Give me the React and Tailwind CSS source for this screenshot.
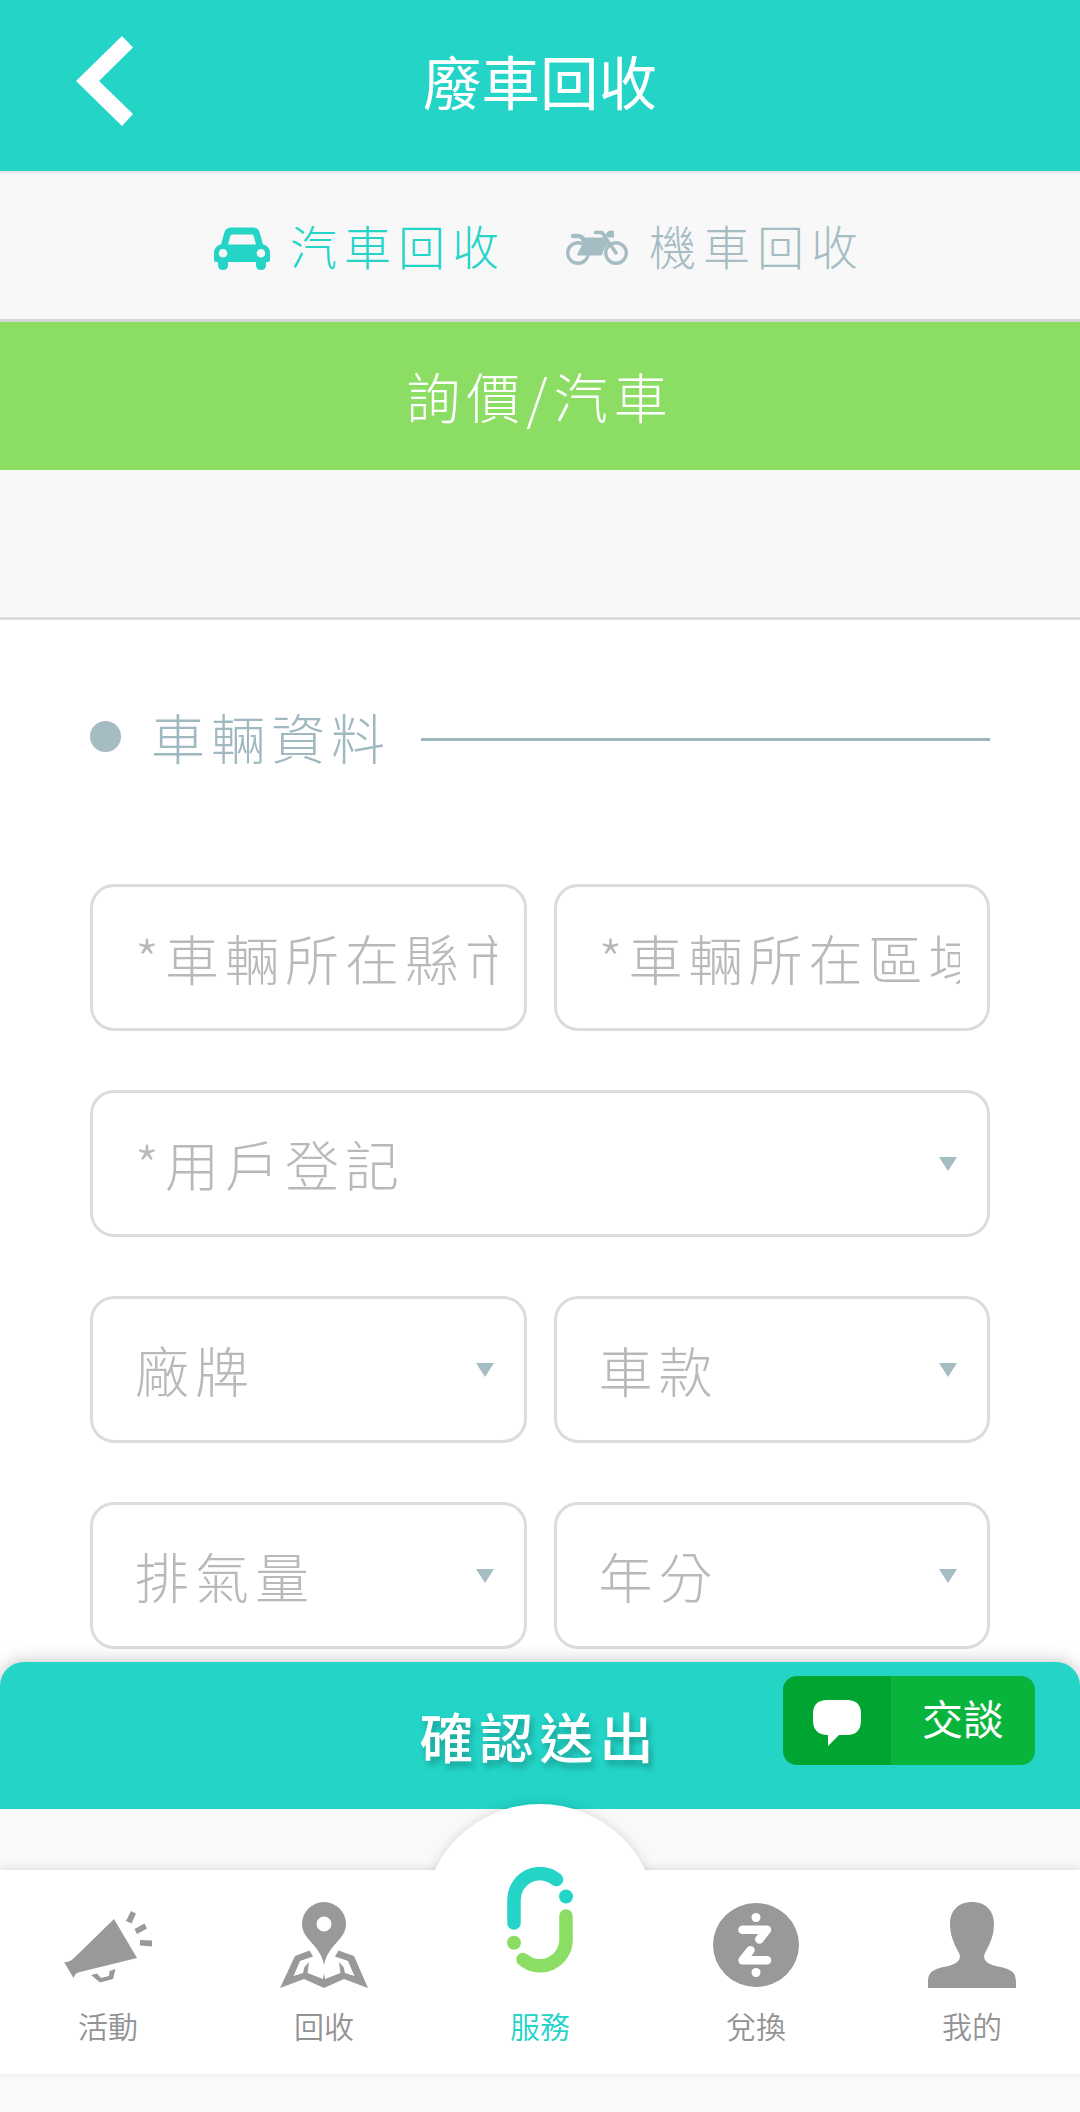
import React from "react";

const rows = [
    [{ label: "*車輛所在縣市", clip: true }, { label: "*車輛所在區域", clip: true }],
    [{ label: "*用戶登記" }],
    [{ label: "廠牌" }, { label: "車款" }],
    [{ label: "排氣量" }, { label: "年分" }]
];

function BackIcon() {
    return (
        <svg viewBox="0 0 58 90" className="w-[58px] h-[90px]">
            <path d="M46 0 L57 11.5 L23 45 L57 78 L46 90 L0 45 Z" fill="#fff" />
        </svg>
    );
}

function CarIcon() {
    return (
        <svg viewBox="0 0 56 43" className="w-[56px] h-[43px]" fill="currentColor">
            <path
                fillRule="evenodd"
                d="M17 0.5 H39 Q44 0.5 45.5 5 L49 17.5 Q56 19 56 26 V33 Q56 35 53 35 H52 V38 Q52 43 47 43 Q42 43 42 38 V35 H14 V38 Q14 43 9 43 Q4 43 4 38 V35 H2 Q0 35 0 33 V26 Q0 19 7 17.5 L10.5 5 Q12 0.5 17 0.5 Z M18 7.5 Q17 7.5 16.5 8.5 L14 17.5 H42 L39.5 8.5 Q39 7.5 38 7.5 Z M9 22 A4.3 4.3 0 1 0 9 30.6 A4.3 4.3 0 1 0 9 22 Z M47 22 A4.3 4.3 0 1 0 47 30.6 A4.3 4.3 0 1 0 47 22 Z"
            />
        </svg>
    );
}

function MotorIcon() {
    return (
        <svg viewBox="0 0 62 36" className="w-[62px] h-[36px]" fill="none" stroke="currentColor" strokeLinecap="round" strokeLinejoin="round">
            <circle cx="12" cy="23" r="10.3" strokeWidth="3.4" />
            <circle cx="50" cy="23" r="10.3" strokeWidth="3.4" />
            <path d="M7 6 H12 Q16 6 19 11" strokeWidth="4.5" />
            <path d="M29.5 2.5 H36 L50 23" strokeWidth="3.6" />
            <path d="M15 10 Q18 7 22 7.5 H36 L40 7 L43.5 12 Q38 17 36.5 24 L35 25.5 H11.5 Q11 24 12 22.5 L17 13 Z M39 4.5 L42.5 1 Q45 0 48 1 V7.5 H42 Z" fill="currentColor" stroke="none" />
        </svg>
    );
}

function MegaphoneIcon() {
    return (
        <svg viewBox="0 0 88 72" className="w-[88px] h-[72px]" fill="#999">
            <path d="M50 8 L73 47 L16 61 Q11 62 9.5 67 L0 51 Q5 52 9 48 Z" />
            <path d="M27 64 L33 62.5 L37 67 L45 65 L45.5 60 L51.5 58 L49 68 L36 71.5 Z" />
            <path d="M67 0 L72 2.5 L67.5 12.5 L62 10 Z M70.5 18 L80.5 12.5 L83 17.5 L73 23 Z M76 29 L88 29.5 V35.5 L76 34.5 Z" />
        </svg>
    );
}

function MapIcon() {
    return (
        <svg viewBox="0 0 88 86" className="w-[88px] h-[86px]" fill="#999">
            <path fillRule="evenodd" d="M44 0 A22 22 0 0 1 66 22 C66 38 48 42 44 63 C40 42 22 38 22 22 A22 22 0 0 1 44 0 Z M44 14.5 A7.5 7.5 0 1 0 44 29.5 A7.5 7.5 0 1 0 44 14.5 Z" />
            <path fillRule="evenodd" d="M29.5 48.5 L33 54.5 L20 59 L13.5 74 L23 71 L24.5 65 L29 60 L27.5 71 L43 77 L44 71 L45 77 L60.5 71 L59 60 L63.5 65 L65 71 L74.5 74 L68 59 L55 54.5 L58.5 48.5 L74 54 L88 86 L64 77 L44 86 L24 77 L0 86 L15 54 Z" />
        </svg>
    );
}

function ServiceIcon() {
    return (
        <svg viewBox="0 0 66 106" className="w-[66px] h-[106px]" fill="none" strokeWidth="13.5" strokeLinecap="round">
            <path d="M7 56 V33 A26 26 0 0 1 49.5 12.5" stroke="#23d4c7" />
            <circle cx="59" cy="29.5" r="7" fill="#23d4c7" />
            <path d="M59 49 V72 A26 26 0 0 1 16 92.5" stroke="#8bdd64" />
            <circle cx="7" cy="75.7" r="7" fill="#8bdd64" />
        </svg>
    );
}

function ExchangeIcon() {
    return (
        <svg viewBox="0 0 86 84" className="w-[86px] h-[84px]">
            <ellipse cx="43" cy="42" rx="43" ry="42" fill="#999" />
            <g fill="none" stroke="#fff" strokeWidth="8.5" strokeLinecap="round" strokeLinejoin="round">
                <path d="M29.5 26.7 H54 L46.3 36.5" />
                <path d="M37.5 47.2 L29.5 57.3 H54" />
            </g>
            <circle cx="43" cy="14.5" r="4.5" fill="#fff" />
            <circle cx="43" cy="69.5" r="4.5" fill="#fff" />
        </svg>
    );
}

function UserIcon() {
    return (
        <svg viewBox="0 0 88 86" className="w-[88px] h-[86px]" fill="#999">
            <path d="M44 0 C58 0 66 9 66 22 C66 33 62 42 57 51 C54 57 58 62 70 64.5 C84 67.5 88 70 88 81 V86 H0 V81 C0 70 4 67.5 18 64.5 C30 62 34 57 31 51 C26 42 22 33 22 22 C22 9 30 0 44 0 Z" />
        </svg>
    );
}

const navItems = [
    { label: "活動", Icon: MegaphoneIcon },
    { label: "回收", Icon: MapIcon },
    { label: "服務", Icon: ServiceIcon, active: true },
    { label: "兌換", Icon: ExchangeIcon },
    { label: "我的", Icon: UserIcon }
];

function Field({ label, clip }) {
    return (
        <div className="flex-1 min-w-0 h-[147px] flex items-center justify-between border-[3px] border-[#dcdcdc] rounded-[24px] pl-[42px] pr-[27px]">
            <span className={`text-[54px] leading-[80px] tracking-[6px] font-light text-[#b9b9b9] whitespace-nowrap ${clip ? "overflow-hidden" : ""}`}>
                {label}
            </span>
            {!clip && (
                <svg viewBox="0 0 18 14" className="w-[18px] h-[14px] shrink-0 mr-[3px]">
                    <path d="M0 0 H18 L9 14 Z" fill="#a5bcc3" />
                </svg>
            )}
        </div>
    );
}

function App() {
    return (
        <div lang="zh-TW" className="w-[1080px] h-[2112px] overflow-hidden flex flex-col bg-white font-['Noto_Sans_CJK_TC',sans-serif]">

            {/* Header */}
            <header className="h-[171px] shrink-0 bg-[#23d4c7] grid grid-cols-3 items-center pb-[9px]">
                <div className="pl-[76px]"><BackIcon /></div>
                <h1 className="text-[58.5px] text-white text-center whitespace-nowrap pb-[3px]">廢車回收</h1>
            </header>

            {/* Tabs */}
            <div className="h-[151px] shrink-0 bg-[#f8f8f9] border-t-2 border-[#e4e4e4] border-b-[3px] border-b-[#d6d6d6] flex items-center pl-[214px] text-[47px] tracking-[7px] font-light whitespace-nowrap">
                <button className="flex items-center gap-[20px] text-[#23d4c7]">
                    <span className="pt-[5px]"><CarIcon /></span>
                    <span className="pb-[1px]">汽車回收</span>
                </button>
                <button className="flex items-center gap-[21px] ml-[60px] text-[#a5bcc3]">
                    <span className="pt-[4px]"><MotorIcon /></span>
                    <span className="pb-[1px]">機車回收</span>
                </button>
            </div>

            <div className="h-[148px] shrink-0 bg-[#8bdd64] flex items-center justify-center text-white text-[54px] tracking-[6px] font-light pb-[2px]">
                詢價/汽車
            </div>
            <div className="h-[150px] shrink-0 bg-[#f8f8f8] border-b-[3px] border-[#dcdcdc]" />

            {/* Form */}
            <main className="h-[1042px] shrink-0 px-[90px] pt-[75px]">
                <div className="flex items-center h-[86px] mb-[103px]">
                    <span className="w-[31px] h-[31px] rounded-full bg-[#a5bcc3] mb-[4px]" />
                    <h2 className="ml-[30px] text-[54px] tracking-[6px] font-light text-[#a0b8c0] whitespace-nowrap pb-[3px]">車輛資料</h2>
                    <span className="ml-[30px] flex-1 h-[3px] bg-[#9db5bd] mt-[2px]" />
                </div>
                <div className="flex flex-col gap-[59px]">
                    {rows.map((row, i) => (
                        <div key={i} className="flex gap-[27px]">
                            {row.map(f => <Field key={f.label} {...f} />)}
                        </div>
                    ))}
                </div>
            </main>

            {/* Submit */}
            <div className="relative h-[147px] shrink-0 rounded-t-[24px] bg-[#23d4c7] shadow-[0_0_18px_rgba(0,0,0,0.25)] flex items-center justify-center">
                <span className="text-white text-[54px] tracking-[6px] font-medium pb-px pr-px [text-shadow:3px_5px_6px_rgba(0,0,0,0.25)]">確認送出</span>
                <button className="absolute left-[783px] top-[14px] w-[252px] h-[89px] rounded-[14px] overflow-hidden flex text-white">
                    <span className="w-[108px] h-full bg-[#00a531] flex items-center justify-center pt-[4px] pr-px">
                        <svg viewBox="0 0 48 46" className="w-[48px] h-[46px]">
                            <path d="M14 0 H34 Q48 0 48 14 V20 Q48 35 34 35 H26 L15 46 V35 Q0 35 0 20 V14 Q0 0 14 0 Z" fill="#fff" />
                        </svg>
                    </span>
                    <span className="flex-1 h-full bg-[#08b43c] flex items-center justify-center pb-[6px] text-[41px]">交談</span>
                </button>
            </div>

            {/* Bottom nav */}
            <div className="relative shrink-0 h-[303px] bg-[#f9f9f9] pt-[61px]">
                <div className="absolute left-[423px] top-[-5px] w-[234px] h-[234px] rounded-full shadow-[0_0_12px_rgba(0,0,0,0.15)]" />
                <nav className="relative h-[204px] bg-white flex shadow-[0_-2px_8px_rgba(0,0,0,0.1)]">
                    <span className="absolute left-[423px] top-[-66px] w-[234px] h-[234px] rounded-full bg-white" />
                    {navItems.map(({ label, Icon, active }) => (
                        <button key={label} className={`relative flex-1 flex flex-col items-center justify-end pb-[27px] text-[30px] leading-[44px] font-[350] ${active ? "text-[#23d4c7]" : "text-[#939393]"}`}>
                            <span className={`flex items-center justify-center ${active ? "h-[106px] mb-[30px]" : "h-[86px] mb-[15px]"} ${label === "活動" ? "pt-[4px]" : ""}`}><Icon /></span>
                            {label}
                        </button>
                    ))}
                </nav>
            </div>
        </div>
    );
}

export default App;
